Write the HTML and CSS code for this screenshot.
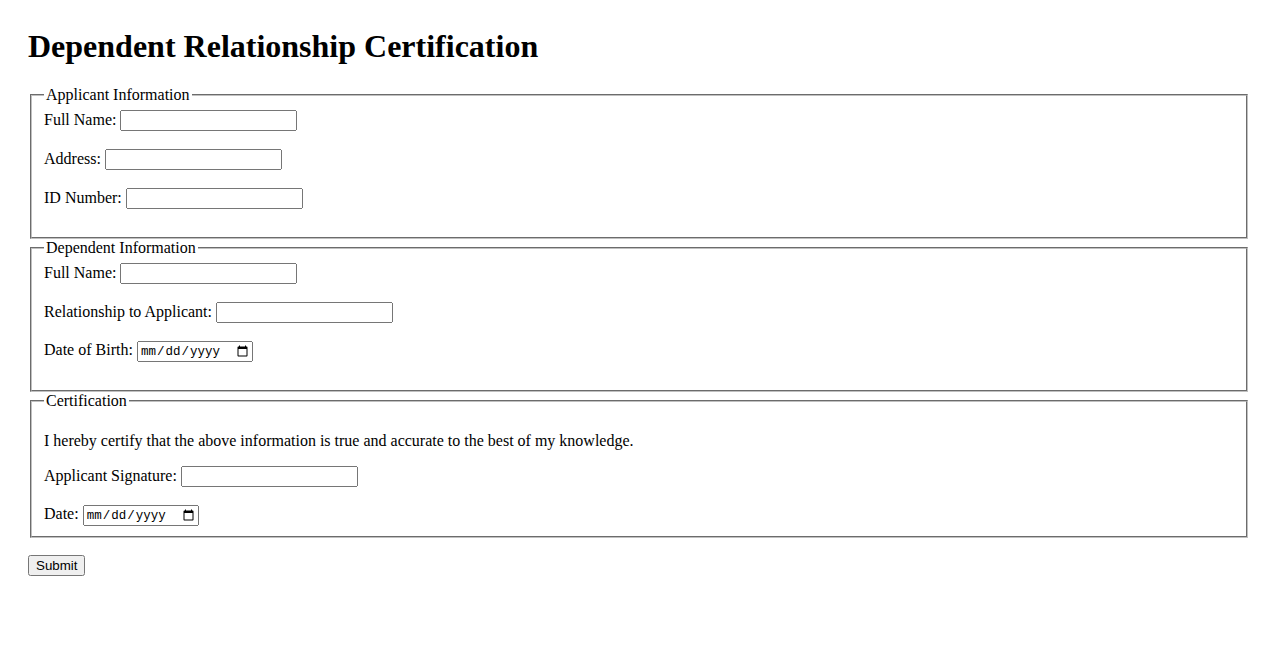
FILE: index.html
```html
<!DOCTYPE html>
<html>
<head>
<meta charset="utf-8">
<title>Dependent Relationship Certification</title>
<link rel="stylesheet" href="styles.css">
</head>
<body>
<h1 class="title">Dependent Relationship Certification</h1>
<form class="form">
  <fieldset class="group">
    <legend>Applicant Information</legend>
    <label for="a-name">Full Name:</label> <input class="text" type="text" id="a-name"><br><br>
    <label for="a-addr">Address:</label> <input class="text" type="text" id="a-addr"><br><br>
    <label for="a-id">ID Number:</label> <input class="text" type="text" id="a-id"><br><br>
  </fieldset>
  <fieldset class="group">
    <legend>Dependent Information</legend>
    <label for="d-name">Full Name:</label> <input class="text" type="text" id="d-name"><br><br>
    <label for="d-rel">Relationship to Applicant:</label> <input class="text" type="text" id="d-rel"><br><br>
    <label for="d-dob">Date of Birth:</label> <input class="date" type="date" id="d-dob"><br><br>
  </fieldset>
  <fieldset class="group">
    <legend>Certification</legend>
    <p class="statement">I hereby certify that the above information is true and accurate to the best of my knowledge.</p>
    <label for="sig">Applicant Signature:</label> <input class="text" type="text" id="sig"><br><br>
    <label for="c-date">Date:</label> <input class="date" type="date" id="c-date">
  </fieldset>
  <div class="actions">
    <button class="submit" type="submit">Submit</button>
  </div>
</form>
</body>
</html>
```
FILE: styles.css
```css
body {
  margin: 28px;
  font-family: "Liberation Serif", "Times New Roman", serif;
  font-size: 16px;
  color: #000;
  background: #fff;
}

.title {
  font-size: 32px;
  font-weight: bold;
  margin: 0 0 21.44px;
}

.form {
  margin: 0;
}

.group {
  margin: 0 2px;
  padding: 0.35em 0.75em 0.625em;
  border: 2px groove rgb(192, 192, 192);
}

.text {
  width: 177px;
  height: 21px;
  box-sizing: border-box;
  font-family: "Liberation Sans", Arial, sans-serif;
  font-size: 13.33px;
}

.date {
  width: 116px;
  height: 21px;
  box-sizing: border-box;
  font-family: "Liberation Mono", monospace;
  font-size: 12.5px;
}

.statement {
  margin: 16px 0;
}

.actions {
  margin-top: 17px;
}

.submit {
  font-family: "Liberation Sans", Arial, sans-serif;
  font-size: 13.33px;
  height: 21px;
  padding: 1px 6px;
}
```
